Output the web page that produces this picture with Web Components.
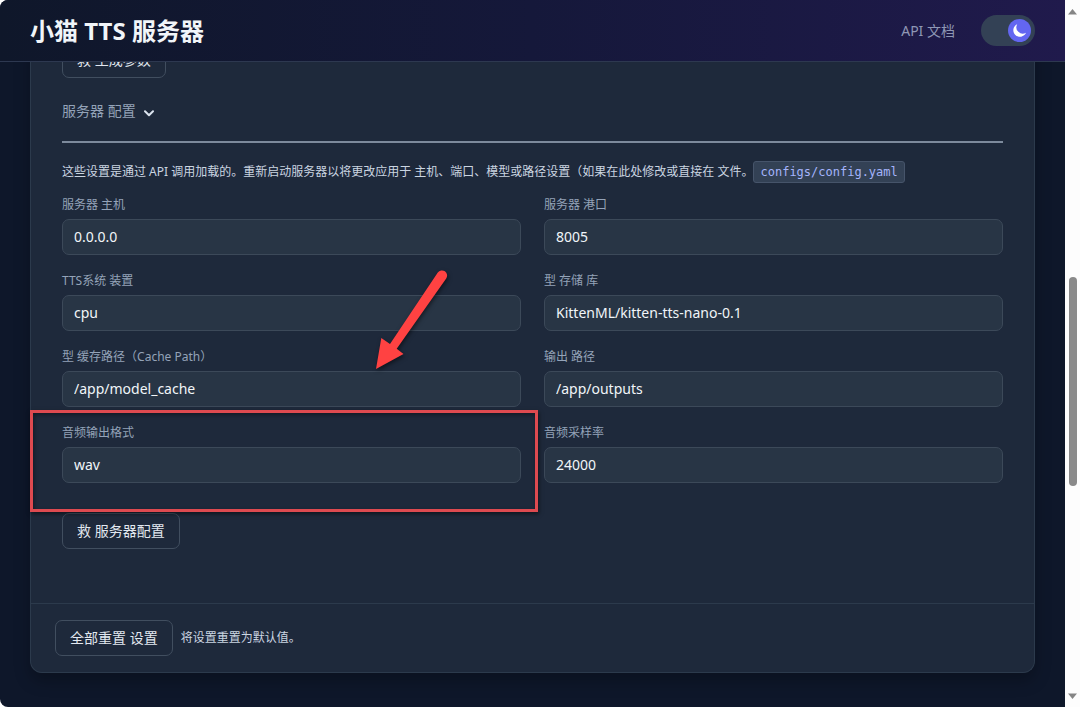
<!DOCTYPE html>
<html lang="zh-CN">
<head>
<meta charset="UTF-8">
<meta name="viewport" content="width=device-width, initial-scale=1">
<title>小猫 TTS 服务器</title>
<style>
    html, body {
        margin: 0;
        height: 100%;
        background: #fff;
    }

    body {
        --card: #1e293b;
        --line: #3c4959;
        --muted: #94a3b8;
        --text: #e2e8f0;
        font-family: "Noto Sans", "Noto Sans CJK SC", sans-serif;
        font-size: 14px;
        line-height: 20px;
        color: var(--text);
        overflow: hidden;
    }
</style>
</head>
<body>
<tts-app>
    <app-header slot="header" heading="小猫 TTS 服务器"></app-header>
    <settings-card>
        <outline-button slot="generation">救 生成参数</outline-button>
        <section-toggle slot="title">服务器 配置</section-toggle>
        <config-note slot="note" file="configs/config.yaml">这些设置是通过 API 调用加载的。重新启动服务器以将更改应用于 主机、端口、模型或路径设置（如果在此处修改或直接在 文件。</config-note>
        <config-field label="服务器 主机" value="0.0.0.0"></config-field>
        <config-field label="服务器 港口" value="8005"></config-field>
        <config-field label="TTS系统 装置" value="cpu"></config-field>
        <config-field label="型 存储 库" value="KittenML/kitten-tts-nano-0.1"></config-field>
        <config-field label="型 缓存路径（Cache Path）" value="/app/model_cache">
            <mark-arrow></mark-arrow>
        </config-field>
        <config-field label="输出 路径" value="/app/outputs"></config-field>
        <config-field label="音频输出格式" value="wav">
            <mark-box></mark-box>
        </config-field>
        <config-field label="音频采样率" value="24000"></config-field>
        <outline-button slot="save">救 服务器配置</outline-button>
        <outline-button slot="footer">全部重置 设置</outline-button>
        <span slot="footer">将设置重置为默认值。</span>
    </settings-card>
</tts-app>

<script>
/**
 * Small helper: attach an open shadow root and fill it
 */
function mount(el, html) {
    el.attachShadow({ mode: 'open' }).innerHTML = html;
}

// Page frame: header, scrolled content, scrollbar
class TtsApp extends HTMLElement {
    constructor() {
        super();
        mount(this, `
            <style>
                :host {
                    display: flex;
                    height: 100vh;
                }

                .view {
                    flex: 1;
                    min-width: 0;
                    display: flex;
                    flex-direction: column;
                    background: #0e172a;
                    border-radius: 8px 0 0 8px;
                    overflow: hidden;
                }

                main {
                    flex: 1;
                    min-height: 0;
                    padding: 0 30px;
                    overflow: hidden;
                }
            </style>
            <div class="view">
                <slot name="header"></slot>
                <main><slot></slot></main>
            </div>
            <page-scrollbar></page-scrollbar>
        `);
    }
}

class AppHeader extends HTMLElement {
    constructor() {
        super();
        mount(this, `
            <style>
                :host {
                    display: block;
                    background: linear-gradient(90deg, #0f172a, #15183a 50%, #201a4c);
                    border-bottom: 1px solid #2d3850;
                }

                header {
                    display: flex;
                    align-items: center;
                    height: 61px;
                    padding: 0 30px;
                }

                h1 {
                    flex: 1;
                    margin: 0;
                    font-size: 24px;
                    line-height: 32px;
                    font-weight: 700;
                    color: #f1f5f9;
                }

                a {
                    margin-right: 26px;
                    font-size: 14px;
                    color: #8f97b5;
                    text-decoration: none;
                }
            </style>
            <header>
                <h1></h1>
                <a href="#docs">API 文档</a>
                <theme-switch></theme-switch>
            </header>
        `);
    }

    connectedCallback() {
        this.shadowRoot.querySelector('h1').textContent = this.getAttribute('heading');
    }
}

class ThemeSwitch extends HTMLElement {
    constructor() {
        super();
        mount(this, `
            <style>
                :host {
                    display: block;
                }

                label {
                    display: flex;
                    align-items: center;
                    justify-content: flex-end;
                    box-sizing: border-box;
                    width: 54px;
                    height: 31px;
                    padding: 0 4px;
                    border-radius: 16px;
                    background: #334155;
                    cursor: pointer;
                }

                label:has(input:not(:checked)) {
                    justify-content: flex-start;
                }

                input {
                    appearance: none;
                    width: 0;
                    height: 0;
                    margin: 0;
                }

                svg {
                    display: block;
                }
            </style>
            <label>
                <input type="checkbox" checked aria-label="深色模式">
                <svg width="23" height="23" viewBox="0 0 23 23">
                    <circle cx="11.5" cy="11.5" r="11.5" fill="#6366f1"/>
                    <path d="M9.2 5.2A6.6 6.6 0 1 0 18 13.8A6.4 6.4 0 0 1 9.2 5.2Z" fill="#fff"/>
                </svg>
            </label>
        `);
    }
}

class PageScrollbar extends HTMLElement {
    constructor() {
        super();
        mount(this, `
            <style>
                :host {
                    display: flex;
                    flex-direction: column;
                    align-items: center;
                    box-sizing: border-box;
                    width: 15px;
                    padding: 9px 0 8px;
                    background: #fdfdfd;
                }

                svg {
                    display: block;
                    fill: #858585;
                }

                .before { flex: 262; }
                .thumb {
                    flex: 208;
                    width: 8px;
                    border-radius: 4px;
                    background: #8a8a8a;
                }
                .after { flex: 207; }
            </style>
            <svg width="9" height="6"><path d="M4.5 0L9 5.5H0Z"/></svg>
            <div class="before"></div>
            <div class="thumb"></div>
            <div class="after"></div>
            <svg width="9" height="6"><path d="M0 0.5H9L4.5 6Z"/></svg>
        `);
    }
}

class SettingsCard extends HTMLElement {
    constructor() {
        super();
        mount(this, `
            <style>
                /* negative margin: the card is scrolled up under the header */
                :host {
                    display: block;
                    margin-top: -20px;
                    background: var(--card);
                    border: 1px solid #2c3a4c;
                    border-top: 0;
                    border-radius: 0 0 12px 12px;
                    box-shadow: 0 8px 16px rgba(0, 0, 0, 0.25);
                }

                .body {
                    padding: 0 31px 54px;
                }

                .title {
                    margin-top: 23px;
                    padding-bottom: 20px;
                    border-bottom: 2px solid #7d8a9c;
                }

                .note {
                    margin: 18px 0 14px;
                }

                .grid {
                    display: grid;
                    grid-template-columns: 1fr 1fr;
                    gap: 18px 23px;
                    margin-bottom: 30px;
                }

                footer {
                    display: flex;
                    align-items: center;
                    gap: 8px;
                    padding: 16px 24px;
                    border-top: 1px solid #2c3a4c;
                }

                footer ::slotted(span) {
                    font-size: 12px;
                    color: #cbd5e1;
                }
            </style>
            <div class="body">
                <slot name="generation"></slot>
                <div class="title"><slot name="title"></slot></div>
                <div class="note"><slot name="note"></slot></div>
                <div class="grid"><slot></slot></div>
                <slot name="save"></slot>
            </div>
            <footer><slot name="footer"></slot></footer>
        `);
    }
}

class OutlineButton extends HTMLElement {
    constructor() {
        super();
        mount(this, `
            <style>
                :host {
                    display: block;
                }

                button {
                    display: block;
                    height: 36px;
                    padding: 0 14px;
                    border: 1px solid #414e5f;
                    border-radius: 7px;
                    background: transparent;
                    color: var(--text);
                    font: inherit;
                    cursor: pointer;
                }
            </style>
            <button type="button"><slot></slot></button>
        `);
    }
}

class SectionToggle extends HTMLElement {
    constructor() {
        super();
        mount(this, `
            <style>
                :host {
                    display: block;
                }

                button {
                    display: flex;
                    align-items: center;
                    gap: 8px;
                    padding: 0;
                    border: 0;
                    background: none;
                    color: var(--muted);
                    font: inherit;
                    cursor: pointer;
                }

                svg {
                    display: block;
                    padding-top: 4px;
                    fill: none;
                    stroke: #dbe3ee;
                    stroke-width: 2;
                    stroke-linecap: round;
                    stroke-linejoin: round;
                }
            </style>
            <button type="button" aria-expanded="true">
                <slot></slot>
                <svg width="10" height="7" viewBox="0 0 10 7"><path d="M1 1.2L5 5.2L9 1.2"/></svg>
            </button>
        `);
    }
}

class ConfigNote extends HTMLElement {
    constructor() {
        super();
        mount(this, `
            <style>
                :host {
                    display: flex;
                    align-items: center;
                    font-size: 12px;
                    color: #cbd5e1;
                    white-space: nowrap;
                }

                code {
                    padding: 0 6px;
                    border: 1px solid #46546a;
                    border-radius: 3px;
                    background: #334155;
                    color: #a5b4fc;
                    font-family: "DejaVu Sans Mono", monospace;
                }
            </style>
            <span><slot></slot></span>
            <code></code>
        `);
    }

    connectedCallback() {
        this.shadowRoot.querySelector('code').textContent = this.getAttribute('file');
    }
}

class ConfigField extends HTMLElement {
    constructor() {
        super();
        mount(this, `
            <style>
                :host {
                    display: flex;
                    flex-direction: column;
                    gap: 6px;
                    position: relative;
                    min-width: 0;
                }

                label {
                    font-size: 12px;
                    line-height: 16px;
                    color: var(--muted);
                }

                input {
                    box-sizing: border-box;
                    width: 100%;
                    height: 36px;
                    padding: 0 11px 2px;
                    border: 1px solid var(--line);
                    border-radius: 7px;
                    outline: none;
                    background: #283545;
                    color: #f1f5f9;
                    font: inherit;
                }
            </style>
            <label for="value"></label>
            <input id="value" type="text">
            <slot></slot>
        `);
    }

    connectedCallback() {
        this.shadowRoot.querySelector('label').textContent = this.getAttribute('label');
        this.shadowRoot.querySelector('input').value = this.getAttribute('value');
    }
}

// Red frame drawn around the field it is placed in
class MarkBox extends HTMLElement {
    constructor() {
        super();
        mount(this, `
            <style>
                :host {
                    position: absolute;
                    inset: -15px -17px -29px -32px;
                    z-index: 1;
                    border: 3px solid #de4a50;
                    box-shadow: 1px 2px 4px rgba(0, 0, 0, 0.5), inset 1px 2px 4px rgba(0, 0, 0, 0.4);
                    pointer-events: none;
                }
            </style>
        `);
    }
}

// Arrow pointing down at the field it is placed in
class MarkArrow extends HTMLElement {
    constructor() {
        super();
        mount(this, `
            <style>
                :host {
                    position: absolute;
                    top: -89px;
                    right: 61px;
                    z-index: 1;
                    pointer-events: none;
                }

                svg {
                    display: block;
                    filter: drop-shadow(1px 2px 2px rgba(0, 0, 0, 0.5));
                }
            </style>
            <svg width="100" height="120" viewBox="0 0 100 120">
                <path fill="#ff4242" d="M16 109L21.3 78L30 84L77.8 12.6A5 5 0 0 1 86.2 18.4L36.7 88.7L43.5 94Z"/>
            </svg>
        `);
    }
}

customElements.define('tts-app', TtsApp);
customElements.define('app-header', AppHeader);
customElements.define('theme-switch', ThemeSwitch);
customElements.define('page-scrollbar', PageScrollbar);
customElements.define('settings-card', SettingsCard);
customElements.define('outline-button', OutlineButton);
customElements.define('section-toggle', SectionToggle);
customElements.define('config-note', ConfigNote);
customElements.define('config-field', ConfigField);
customElements.define('mark-box', MarkBox);
customElements.define('mark-arrow', MarkArrow);
</script>
</body>
</html>
